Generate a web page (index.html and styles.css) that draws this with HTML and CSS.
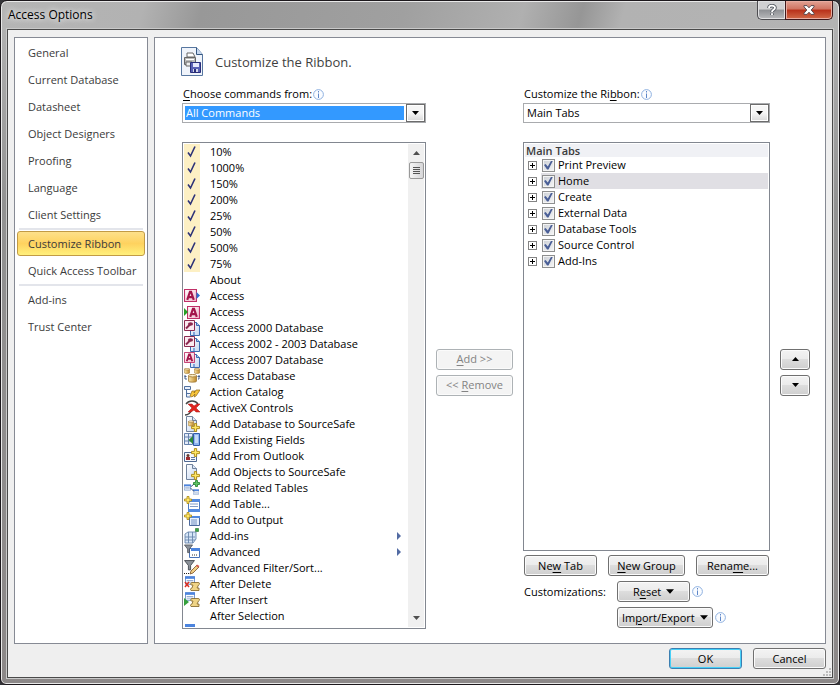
FILE: index.html
```html
<!DOCTYPE html>
<html lang="en">
<head>
<meta charset="utf-8">
<title>Access Options</title>
<link rel="stylesheet" href="styles.css">
</head>
<body>
<svg class="sprite" aria-hidden="true">
  <defs>
    <linearGradient id="pageFill" x1="0" y1="0" x2="1" y2="1"><stop offset="0" stop-color="#fff"/><stop offset="1" stop-color="#c3d5f0"/></linearGradient>
    <linearGradient id="gold" x1="0" y1="0" x2="1" y2="0"><stop offset="0" stop-color="#fbe6a8"/><stop offset="1" stop-color="#c08a2c"/></linearGradient>
    <linearGradient id="rose" x1="0" y1="0" x2="1" y2="1"><stop offset="0" stop-color="#fff"/><stop offset="1" stop-color="#f0b9cb"/></linearGradient>
  </defs>
  <symbol id="info" viewBox="0 0 11 11"><circle cx="5.500" cy="5.500" r="4.900" fill="#fafcff" stroke="#8fb1e0"/><path d="M5 2h1v1.500H5zM5 4.500h1V9H5z" fill="#5d86c8"/></symbol>
  <symbol id="down" viewBox="0 0 7 4"><path d="M0 0h7L3.500 4z"/></symbol>
  <symbol id="up" viewBox="0 0 7 4"><path d="M0 4h7L3.500 0z"/></symbol>
  <symbol id="tick" viewBox="0 0 16 16"><path d="M0 0h16v16H0z" fill="#fdf0c4"/><path d="M4 8.500l2.500 3.500L11 2.500" fill="none" stroke="#2d3278" stroke-width="1.600"/></symbol>
  <symbol id="a-mark" viewBox="0 0 12 12"><path d="M.5.500h11v11H.5z" fill="url(#rose)" stroke="#c03068"/><path d="M3 10l2.500-7.500h1L9 10M4.200 7.500h3.600" fill="none" stroke="#a3154a" stroke-width="2"/></symbol>
  <symbol id="access-out" viewBox="0 0 16 16"><use href="#a-mark" x="0" y="1" width="13" height="13"/><path d="M12.500 4L16 7.500 12.500 11z" fill="#2a6fd0"/></symbol>
  <symbol id="access-in" viewBox="0 0 16 16"><use href="#a-mark" x="3" y="2" width="13" height="13"/><path d="M0 4l4 4-4 4z" fill="#27a027"/></symbol>
  <symbol id="db-pages" viewBox="0 0 16 16"><path d="M6.500 2.500h6l3 3v10h-9z" fill="url(#pageFill)" stroke="#3d6ab0"/><path d="M12.500 2.500v3h3" fill="#a9c4ec" stroke="#3d6ab0"/><path d="M9 12h2v3H9z" fill="#7fa5dd"/></symbol>
  <symbol id="db-key" viewBox="0 0 16 16"><use href="#db-pages"/><path d="M.5.500h10v10H.5z" fill="#fbeaf0" stroke="#8c2a50"/><path d="M2 8.500l4-4" stroke="#8c2a50" stroke-width="2"/><ellipse cx="6.500" cy="4" rx="2.600" ry="1.800" fill="#8c2a50"/></symbol>
  <symbol id="db-a" viewBox="0 0 16 16"><use href="#db-pages"/><use href="#a-mark" width="11" height="11"/></symbol>
  <symbol id="can" viewBox="0 0 8 8"><path d="M.5 1.500v5c0 1 7 1 7 0v-5z" fill="url(#gold)" stroke="#99702a" stroke-width=".7"/><ellipse cx="4" cy="1.500" rx="3.500" ry="1.100" fill="#fff2ca" stroke="#99702a" stroke-width=".7"/></symbol>
  <symbol id="cans" viewBox="0 0 16 16"><use href="#can" x="0" y="0" width="6" height="6"/><use href="#can" x="10" y="0" width="6" height="6"/><use href="#can" x="4" y="6" width="9" height="9"/><path d="M1 7v4h2M.5 8.500h2M15 7v4h-1M13.500 8.500H16" fill="none" stroke="#49628f"/></symbol>
  <symbol id="catalog" viewBox="0 0 16 16"><path d="M.5 2.500h6v3h-6zM2.500 6v7h4M2.500 9.500h4" fill="#e9f0fb" stroke="#51709f"/><path d="M6 12l2-5h3l-1 2 2-3h4l-4 6-2 1 1-3-3 3z" fill="#f9c63b" stroke="#8c6516" stroke-width=".7"/></symbol>
  <symbol id="activex" viewBox="0 0 16 16"><path d="M2 4c3-4 9-4 12 0M1 15c4 0 6-3 7-6" fill="none" stroke="#444" stroke-width="1.300"/><path d="M4 4h4l2 2 3-2h3l-4 4 4 4h-4l-2-2-3 2H4l4-4z" fill="#e1251f" stroke="#a81414" stroke-width=".5"/></symbol>
  <symbol id="plus-gold" viewBox="0 0 8 8"><path d="M3 .5h2V3h2.500v2H5v2.500H3V5H.5V3H3z" fill="#ffe766" stroke="#a98610" stroke-width=".8"/></symbol>
  <symbol id="page" viewBox="0 0 16 16"><path d="M2.500.5h6l4 4v11h-10z" fill="url(#pageFill)" stroke="#71839d"/><path d="M8.500.5v4h4" fill="#dbe6f7" stroke="#71839d"/></symbol>
  <symbol id="add-db" viewBox="0 0 16 16"><use href="#page"/><use href="#can" x="4" y="4" width="6" height="7"/><use href="#plus-gold" x="7" y="7" width="9" height="9"/></symbol>
  <symbol id="add-page" viewBox="0 0 16 16"><use href="#page"/><use href="#plus-gold" x="7" y="7" width="9" height="9"/></symbol>
  <symbol id="fields" viewBox="0 0 16 16"><path d="M.5 1.500h8v11h-8zM.5 5h8M.5 9h8M4.500 1.500v11" fill="#e5ecf8" stroke="#6682ad"/><path d="M9.500 1.500h6v12h-6z" fill="#8db5ee" stroke="#315ca9"/><path d="M11 4h3M11 6h3M11 8h3M11 10h3" stroke="#fff"/><path d="M9 4v8L4.500 8z" fill="#2d8a3a"/></symbol>
  <symbol id="outlook" viewBox="0 0 16 16"><path d="M.5 4.500h12v9H.5z" fill="#f6f8fc" stroke="#506a93"/><path d="M2 9h4v3H2z" fill="#a02d31"/><circle cx="4" cy="7.500" r="1.500" fill="#663d32"/><path d="M7 9.500h4M7 11.500h4" stroke="#5d78a2"/><use href="#plus-gold" x="7" y="0" width="9" height="9"/></symbol>
  <symbol id="grid" viewBox="0 0 12 10"><path d="M.5.500h11v9H.5z" fill="#fff" stroke="#4f79bc"/><path d="M0 0h12v3H0z" fill="#4c84de"/><path d="M2 5h8M2 7h8" stroke="#829dc8"/></symbol>
  <symbol id="related" viewBox="0 0 16 16"><use href="#grid" x="0" y="4" width="7" height="7"/><use href="#grid" x="9" y="9" width="6" height="6"/><path d="M6.500 7L10 4M6.500 8L10 11.500" stroke="#334f7c"/><path d="M11.500.5h2v2h2v2h-2v2h-2v-2h-2v-2h2z" fill="#5ec565" stroke="#207e2a" stroke-width=".8"/></symbol>
  <symbol id="add-table" viewBox="0 0 16 16"><path d="M4.500 3.500h11v12h-11z" fill="#fff" stroke="#4f79bc"/><path d="M4 3h12v3H4zM4 13h12v3H4z" fill="#5289df"/><path d="M6 8h8M6 10.500h8" stroke="#829dc8"/><use href="#plus-gold" width="8" height="8"/></symbol>
  <symbol id="output" viewBox="0 0 16 16"><path d="M5.500 4.500h10v9h-10z" fill="#e9f1fe" stroke="#4d6a9d"/><path d="M5 4h11v2H5z" fill="#5289df"/><path d="M7 8h6M7 10h6M7 12h6" stroke="#7190bf"/><use href="#plus-gold" width="8" height="8"/></symbol>
  <symbol id="addins" viewBox="0 0 16 16"><path d="M1 6l3-2h8v7l-3 4H1zM1 9h10M1 12h10M4.500 4v11M8.500 4v11" fill="#d7e6f7" stroke="#6a87ad" stroke-width=".9"/><path d="M11.500.5h3v3h-3z" fill="#3ba444" stroke="#236f2a" stroke-width=".6"/></symbol>
  <symbol id="funnel" viewBox="0 0 10 10"><path d="M.5.500h9L6 5v4H4V5z" fill="#8b9199" stroke="#41464d" stroke-width=".8"/></symbol>
  <symbol id="advanced" viewBox="0 0 16 16"><path d="M5.500 4.500h10v9h-10z" fill="#fff" stroke="#4972b7"/><path d="M7 4h9v3H7z" fill="#4c84de"/><path d="M8 11h1M10 11h1M12 11h1" stroke="#333"/><use href="#funnel" width="9" height="10"/></symbol>
  <symbol id="filter-sort" viewBox="0 0 16 16"><use href="#funnel" width="11" height="11"/><path d="M0 13.500h1M2 13.500h1M4 13.500h1" stroke="#222"/><path d="M6 14l1-3 6-6 2 2-6 6z" fill="#f1ce84" stroke="#785128" stroke-width=".8"/><path d="M12 6l1-1.500L15.500 6 14 7.500z" fill="#d75d52"/></symbol>
  <symbol id="scroll" viewBox="0 0 10 9"><path d="M2 .5h6c2 0 2 2 .5 2.500L7 6h2v2.500H1C-.2 7.500.8 6 2 6l1-3H1.500C.3 3 .5.500 2 .5z" fill="#efd486" stroke="#7d6123" stroke-width=".8"/></symbol>
  <symbol id="after-delete" viewBox="0 0 16 16"><use href="#grid" x="1" y="0" width="10" height="9"/><path d="M1 6l4 5M5 6l-4 5" stroke="#da3025" stroke-width="1.500"/><use href="#scroll" x="6" y="6" width="10" height="9"/></symbol>
  <symbol id="after-insert" viewBox="0 0 16 16"><use href="#grid" x="1" y="0" width="10" height="9"/><path d="M0 6l5 4-5 4z" fill="#35a03d"/><use href="#scroll" x="6" y="6" width="10" height="9"/></symbol>
  <symbol id="partial" viewBox="0 0 16 16"><path d="M1 0h10v9H1z" fill="#4c84de"/></symbol>
</svg>

<div class="window">
  <header class="titlebar">
    <h1 class="title">Access Options</h1>
    <div class="caption">
      <button class="cap cap-help" type="button" aria-label="Help"><svg width="10" height="12" viewBox="0 0 10 12"><path d="M2 4c0-3 6-3 6-.2C8 6 5 5.500 5 8M5 9.300V11" fill="none" stroke="#555a63" stroke-width="3.600"/><path d="M2 4c0-3 6-3 6-.2C8 6 5 5.500 5 8M5 9.300V11" fill="none" stroke="#fff" stroke-width="1.800"/></svg></button>
      <button class="cap cap-close" type="button" aria-label="Close"><svg width="12" height="10" viewBox="0 0 12 10"><path d="M1 .6h3l2 2.200L8 .6h3v1.200L8.200 5 11 8.200v1.200H8L6 7.200 4 9.400H1V8.200L3.800 5 1 1.800z" fill="#fff" stroke="#5b4a4f"/></svg></button>
    </div>
  </header>

  <div class="client">
    <div class="panes">
      <nav class="nav">
        <a href="#">General</a>
        <a href="#">Current Database</a>
        <a href="#">Datasheet</a>
        <a href="#">Object Designers</a>
        <a href="#">Proofing</a>
        <a href="#">Language</a>
        <a href="#">Client Settings</a>
        <hr>
        <a href="#" class="current" aria-current="page">Customize Ribbon</a>
        <a href="#">Quick Access Toolbar</a>
        <hr>
        <a href="#">Add-ins</a>
        <a href="#">Trust Center</a>
      </nav>

      <main class="main">
        <div class="heading">
          <svg width="24" height="31" viewBox="0 0 24 31"><path d="M.5.500h15l6 7v21H.5z" fill="#f0f4fb" stroke="#5877a0"/><path d="M15.500.5v7h6" fill="#c6d7ef" stroke="#34567f"/><path d="M6 6h6l2 4H6z" fill="#fff" stroke="#666" /><path d="M3.500 10.500h11v7h-11z" fill="#bbb" stroke="#666"/><path d="M5 15h6v4H5z" fill="#eee" stroke="#666"/><path d="M5 12.500h8" stroke="#fff"/><path d="M9.500 15.500h10v10h-10z" fill="#5960b4" stroke="#292e79"/><path d="M12 16h6v4h-6z" fill="#e6e8fb"/><path d="M12 22h5v3h-5z" fill="#d6d8e8"/><path d="M13 22h2v3h-2z" fill="#292e79"/></svg>
          <h2>Customize the Ribbon.</h2>
        </div>

        <div class="columns">
          <section class="col">
            <div class="field-label"><label for="source"><u>C</u>hoose commands from:</label><svg class="info"><use href="#info"/></svg></div>
            <div class="combo active">
              <select id="source"><option>All Commands</option></select>
              <span class="drop"><svg width="7" height="4"><use href="#down"/></svg></span>
            </div>
            <div class="listbox">
              <ul class="commands">
                <li><svg><use href="#tick"/></svg>10%</li>
                <li><svg><use href="#tick"/></svg>1000%</li>
                <li><svg><use href="#tick"/></svg>150%</li>
                <li><svg><use href="#tick"/></svg>200%</li>
                <li><svg><use href="#tick"/></svg>25%</li>
                <li><svg><use href="#tick"/></svg>50%</li>
                <li><svg><use href="#tick"/></svg>500%</li>
                <li><svg><use href="#tick"/></svg>75%</li>
                <li><svg></svg>About</li>
                <li><svg><use href="#access-out"/></svg>Access</li>
                <li><svg><use href="#access-in"/></svg>Access</li>
                <li><svg><use href="#db-key"/></svg>Access 2000 Database</li>
                <li><svg><use href="#db-key"/></svg>Access 2002 - 2003 Database</li>
                <li><svg><use href="#db-a"/></svg>Access 2007 Database</li>
                <li><svg><use href="#cans"/></svg>Access Database</li>
                <li><svg><use href="#catalog"/></svg>Action Catalog</li>
                <li><svg><use href="#activex"/></svg>ActiveX Controls</li>
                <li><svg><use href="#add-db"/></svg>Add Database to SourceSafe</li>
                <li><svg><use href="#fields"/></svg>Add Existing Fields</li>
                <li><svg><use href="#outlook"/></svg>Add From Outlook</li>
                <li><svg><use href="#add-page"/></svg>Add Objects to SourceSafe</li>
                <li><svg><use href="#related"/></svg>Add Related Tables</li>
                <li><svg><use href="#add-table"/></svg>Add Table...</li>
                <li><svg><use href="#output"/></svg>Add to Output</li>
                <li class="sub"><svg><use href="#addins"/></svg>Add-ins</li>
                <li class="sub"><svg><use href="#advanced"/></svg>Advanced</li>
                <li><svg><use href="#filter-sort"/></svg>Advanced Filter/Sort...</li>
                <li><svg><use href="#after-delete"/></svg>After Delete</li>
                <li><svg><use href="#after-insert"/></svg>After Insert</li>
                <li><svg></svg>After Selection</li>
                <li><svg><use href="#partial"/></svg></li>
              </ul>
              <div class="scrollbar">
                <svg width="7" height="4"><use href="#up"/></svg>
                <span class="thumb"><i></i><i></i><i></i><i></i></span>
                <svg class="end" width="7" height="4"><use href="#down"/></svg>
              </div>
            </div>
          </section>

          <div class="stack">
            <button class="btn" type="button" disabled><u>A</u>dd &gt;&gt;</button>
            <button class="btn" type="button" disabled>&lt;&lt; <u>R</u>emove</button>
          </div>

          <section class="col">
            <div class="field-label"><label for="target">Customize the Ri<u>b</u>bon:</label><svg class="info"><use href="#info"/></svg></div>
            <div class="combo">
              <select id="target"><option>Main Tabs</option></select>
              <span class="drop"><svg width="7" height="4"><use href="#down"/></svg></span>
            </div>
            <div class="listbox tree">
              <h3>Main Tabs</h3>
              <ul>
                <li><button class="expand" type="button" aria-label="Expand Print Preview"></button><label><input type="checkbox" checked>Print Preview</label></li>
                <li class="selected"><button class="expand" type="button" aria-label="Expand Home"></button><label><input type="checkbox" checked>Home</label></li>
                <li><button class="expand" type="button" aria-label="Expand Create"></button><label><input type="checkbox" checked>Create</label></li>
                <li><button class="expand" type="button" aria-label="Expand External Data"></button><label><input type="checkbox" checked>External Data</label></li>
                <li><button class="expand" type="button" aria-label="Expand Database Tools"></button><label><input type="checkbox" checked>Database Tools</label></li>
                <li><button class="expand" type="button" aria-label="Expand Source Control"></button><label><input type="checkbox" checked>Source Control</label></li>
                <li><button class="expand" type="button" aria-label="Expand Add-Ins"></button><label><input type="checkbox" checked>Add-Ins</label></li>
              </ul>
            </div>
            <div class="actions">
              <button class="btn" type="button">Ne<u>w</u> Tab</button>
              <button class="btn wide" type="button"><u>N</u>ew Group</button>
              <button class="btn" type="button">Rena<u>m</u>e...</button>
            </div>
            <div class="custom">
              <span>Customizations:</span>
              <div class="row"><button class="btn" type="button">R<u>e</u>set <svg width="7" height="4"><use href="#down"/></svg></button><svg class="info"><use href="#info"/></svg></div>
              <div class="row second"><button class="btn" type="button">Im<u>p</u>ort/Export <svg width="7" height="4"><use href="#down"/></svg></button><svg class="info"><use href="#info"/></svg></div>
            </div>
          </section>

          <div class="stack">
            <button class="btn" type="button" aria-label="Move up"><svg width="7" height="4"><use href="#up"/></svg></button>
            <button class="btn" type="button" aria-label="Move down"><svg width="7" height="4"><use href="#down"/></svg></button>
          </div>
        </div>
      </main>
    </div>

    <footer class="footer">
      <button class="btn default" type="button">OK</button>
      <button class="btn" type="button">Cancel</button>
      <svg class="grip" width="8" height="8" viewBox="0 0 8 8"><path d="M6 0h2v2H6zM3 3h2v2H3zM6 3h2v2H6zM0 6h2v2H0zM3 6h2v2H3zM6 6h2v2H6z" fill="#bdbdbd"/></svg>
    </footer>
  </div>
</div>
</body>
</html>
```
FILE: styles.css
```css
* { box-sizing: border-box; }

body {
  margin: 0;
  background: #343438;
  font: 11px/16px "Open Sans", "Noto Sans", sans-serif;
  color: #000;
}

button, select, input { font: inherit; color: inherit; margin: 0; }
ul { list-style: none; margin: 0; padding: 0; }
u { text-underline-offset: 2px; }
.sprite { position: absolute; width: 0; height: 0; }

/* Window frame */
.window {
  display: flex;
  flex-direction: column;
  height: 100vh;
  padding: 0 6px 6px;
  border: 1px solid #1c181c;
  border-radius: 7px 7px 6px 6px;
  background: linear-gradient(105deg, #b5b5b5 0, #b2b2b2 17%, #989898 24%, #a0a0a0 48%, #b0b0b0 62%, #969696 69%, #b2b2b2 74%, #b4b4b4 100%) top / 100% 29px no-repeat, linear-gradient(#b5b5b5 0, #929292 30%, #8c8888 100%);
  box-shadow: inset 0 0 0 1px #e9e9e9;
}

.titlebar { display: flex; justify-content: space-between; height: 28px; flex: none; }
.title {
  margin: 0;
  padding: 6px 1px 0;
  font-size: 12px;
  font-weight: 400;
  text-shadow: 0 0 7px #fff, 0 0 5px #ddd;
}
.caption { display: flex; height: 19px; }
.cap {
  display: grid;
  place-items: center;
  width: 28px;
  padding: 0;
  border: 1px solid #4c4c50;
  border-top: 0;
  background: linear-gradient(#d0d0d2 45%, #8e9094 50%, #b9babd);
  box-shadow: inset 0 0 0 1px #e0e0e2;
}
.cap-help { border-right: 0; border-radius: 0 0 0 5px; }
.cap-close {
  width: 48px;
  border-color: #40191b;
  border-radius: 0 0 5px 0;
  background: linear-gradient(#e2a294 0, #d07461 45%, #b8301a 50%, #d16a48);
  box-shadow: inset 0 0 0 1px #e9aca0;
}

.client {
  display: flex;
  flex: 1;
  flex-direction: column;
  min-height: 0;
  padding: 7px 6px 0;
  border: 1px solid #4a4a4a;
  outline: 1px solid #c9c9c9;
  background: #efefef;
}
.panes { display: flex; flex: 1; gap: 6px; min-height: 0; }

/* Category list */
.nav { flex: none; width: 134px; padding: 1px 2px; border: 1px solid #868a94; background: #fff; }
.nav a {
  display: block;
  padding: 0 11px;
  color: #3b3b3b;
  line-height: 27px;
  text-decoration: none;
  white-space: nowrap;
}
.nav hr { height: 2px; margin: 0 2px; border: 0; background: #e3e5eb; }
.nav .current {
  margin: 1px 0;
  padding: 0 10px;
  border: 1px solid #c29b45;
  border-radius: 3px;
  background: linear-gradient(#fde08a, #fed25f 50%, #fff07c);
  line-height: 23px;
}

/* Main pane */
.main {
  display: flex;
  flex: 1;
  flex-direction: column;
  min-width: 0;
  padding: 6px 15px 14px 27px;
  border: 1px solid #868a94;
  background: #fff;
}
.heading { display: flex; flex: none; align-items: center; gap: 10px; height: 36px; margin-left: -1px; }
.heading svg { flex: none; }
.heading h2 { margin: 0; color: #3f3f3f; font-size: 13px; font-weight: 400; }

.columns {
  display: grid;
  flex: 1;
  grid-template-columns: minmax(0, 244fr) 77px minmax(0, 247fr) 30px;
  grid-template-rows: minmax(0, 1fr);
  gap: 10px;
  min-height: 0;
  padding-top: 6px;
}
.col { display: flex; flex-direction: column; min-height: 0; }
.field-label { display: flex; align-items: center; gap: 1px; height: 16px; padding-left: 1px; margin-bottom: 1px; }
.info { flex: none; width: 11px; height: 11px; }

.combo { display: flex; flex: none; height: 20px; padding: 0 0 0 2px; border: 1px solid #a9abae; }
.combo select {
  flex: 1;
  min-width: 0;
  height: 14px;
  margin: 2px 2px 2px 0;
  padding: 0 1px;
  border: 0;
  outline: 0;
  background: none;
  line-height: 14px;
  appearance: none;
}
.combo.active select { background: #3399ff; color: #fff; }
.drop {
  display: grid;
  place-items: center;
  width: 19px;
  border: 1px solid #6c6c6c;
  background: linear-gradient(#f6f6f6 50%, #d8d8d8);
  box-shadow: inset 0 0 0 1px #fff;
  pointer-events: none;
}

.listbox { display: flex; flex: 1; min-height: 0; margin-top: 19px; padding: 1px; overflow: hidden; border: 1px solid #828790; }
.commands { flex: 1; min-width: 0; overflow: hidden; }
.commands li { display: flex; gap: 10px; height: 16px; line-height: 16px; white-space: nowrap; }
.commands svg { flex: none; width: 16px; height: 16px; }
.commands .sub::after {
  content: "";
  width: 4px;
  height: 8px;
  margin: 4px 7px 0 auto;
  background: #526ba3;
  clip-path: polygon(0 0, 100% 50%, 0 100%);
}
.scrollbar { display: flex; flex-direction: column; align-items: center; width: 16px; padding: 7px 0; background: #f0f0f0; }
.scrollbar svg { fill: #505050; }
.scrollbar .end { margin-top: auto; }
.thumb {
  display: grid;
  align-content: center;
  justify-items: center;
  gap: 1px;
  width: 15px;
  height: 17px;
  margin-top: 7px;
  border: 1px solid #999;
  border-radius: 2px;
  background: linear-gradient(90deg, #f5f5f5, #d6d6d8);
}
.thumb i { width: 7px; height: 1px; background: #555; }

/* Tab tree */
.tree { flex-direction: column; }
.tree h3 { margin: 0; padding: 0 1px; background: #f0f1f5; color: #3b3b3b; font-size: 11px; font-weight: 600; line-height: 13px; }
.tree li { display: flex; align-items: center; height: 16px; padding-left: 3px; }
.tree label { display: flex; flex: 1; align-items: center; gap: 3px; height: 16px; margin-left: 4px; padding-left: 1px; line-height: 14px; }
.tree .selected label { background: #e0dfe4; }
.tree input {
  display: grid;
  place-items: center;
  width: 13px;
  height: 13px;
  border: 1px solid #8e8f8f;
  background: linear-gradient(135deg, #cbcfd5, #f6f6f6);
  box-shadow: inset 0 0 0 1px #f4f4f4;
  appearance: none;
}
.tree input:checked::after {
  content: "";
  width: 9px;
  height: 9px;
  background: #4a5f97;
  clip-path: polygon(0 50%, 18% 40%, 42% 68%, 80% 0, 100% 0, 50% 100%, 34% 100%);
}
.expand {
  width: 9px;
  height: 9px;
  padding: 0;
  border: 1px solid #848484;
  background: linear-gradient(#000, #000) center / 5px 1px no-repeat, linear-gradient(#000, #000) center / 1px 5px no-repeat, #fff;
}

/* Buttons */
.btn {
  display: flex;
  flex: none;
  align-items: center;
  justify-content: center;
  min-width: 73px;
  height: 21px;
  padding: 0 4px;
  border: 1px solid #707070;
  border-radius: 3px;
  background: linear-gradient(#f3f3f3, #ebebeb 50%, #dddddd 50%, #cfcfcf);
  box-shadow: inset 0 0 0 1px #fbfbfb;
  line-height: 18px;
  white-space: pre;
}
.btn.wide { min-width: 77px; }
.btn:disabled { border-color: #adb2b5; background: #f4f4f4; color: #838383; }
.btn.default { border-color: #3c7fb1; box-shadow: inset 0 0 0 1px #46d0f8; }

.stack { display: flex; flex-direction: column; justify-content: center; gap: 5px; padding-top: 29px; }
.stack .btn { min-width: 0; }
.actions { display: flex; justify-content: space-between; margin-top: 4px; padding: 0 1px; }
.custom { display: grid; grid-template-columns: 93px 1fr; gap: 5px 0; align-items: center; margin: 5px 0 0; padding: 0 0 1px 1px; }
.row { display: flex; align-items: center; gap: 2px; }
.row.second { grid-column: 2; }
.row .btn svg { width: 8px; height: 5px; margin-left: 2px; }

.footer { display: flex; flex: none; justify-content: flex-end; gap: 11px; height: 33px; padding-top: 4px; position: relative; }
.grip { position: absolute; right: -5px; bottom: 1px; }
```
